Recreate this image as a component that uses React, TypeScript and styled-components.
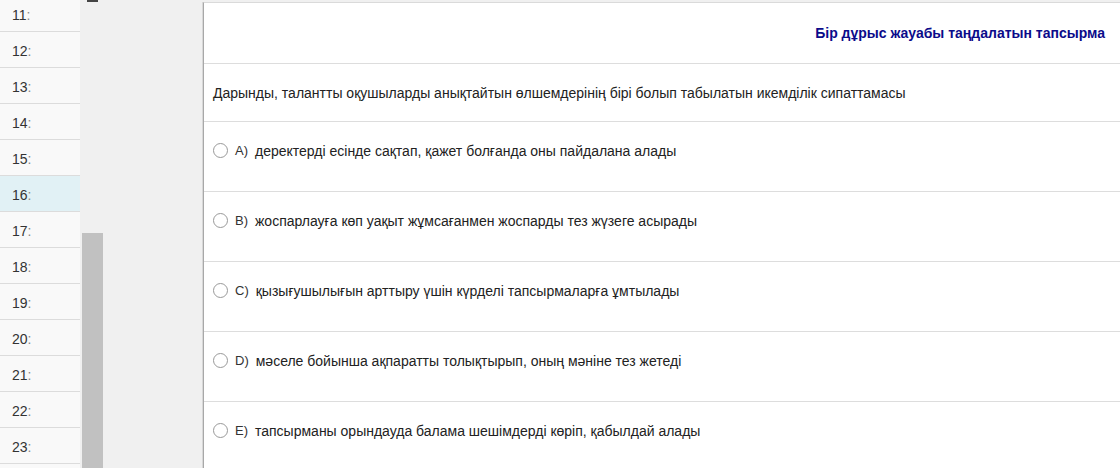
import React from "react";
import styled, { createGlobalStyle } from "styled-components";

const Global = createGlobalStyle`
  html, body { margin: 0; padding: 0; }
  body {
    width: 1120px;
    height: 468px;
    overflow: hidden;
    background: #f0f0f0;
    font-family: "Liberation Sans", Arial, sans-serif;
  }
`;

const Page = styled.div`
  display: flex;
  width: 1120px;
  height: 468px;
  overflow: hidden;
`;

const NumberList = styled.div`
  width: 80px;
  flex: none;
  margin-top: -4px;
  background: #f9f9f9;
  display: flex;
  flex-direction: column;
`;

const NumberRow = styled.div<{ $active?: boolean }>`
  height: 36px;
  flex: none;
  box-sizing: border-box;
  padding: 2px 0 0 12px;
  border-bottom: 1px solid #dcdcdc;
  background: ${(p) => (p.$active ? "#e1f1f5" : "#f9f9f9")};
  display: flex;
  align-items: center;
  font-size: 14px;
  color: #333;
`;

const Colon = styled.span`
  color: #888;
`;

const Gutter = styled.div`
  width: 123px;
  flex: none;
  display: flex;
  flex-direction: column;
  padding-left: 2px;
  box-sizing: border-box;
`;

const Mark = styled.div`
  width: 11px;
  height: 2px;
  margin-left: 5px;
  background: #444;
`;

const Spacer = styled.div`
  height: 231px;
  flex: none;
`;

const Thumb = styled.div`
  width: 21px;
  flex: 1;
  background: #c1c1c1;
`;

const CardArea = styled.div`
  flex: 1;
  padding-top: 2px;
  display: flex;
`;

const Card = styled.div`
  flex: 1;
  background: #fff;
  border-top: 1px solid #dadada;
  border-left: 1px solid #a8a8a8;
  box-shadow: -1px 0 0 #d8d8d8;
  display: flex;
  flex-direction: column;
`;

const Header = styled.div`
  height: 60px;
  flex: none;
  border-bottom: 1px solid #dddddd;
  display: flex;
  align-items: center;
  justify-content: flex-end;
  padding-right: 15px;
`;

const Title = styled.div`
  font-size: 14px;
  font-weight: bold;
  color: #0b0b8a;
`;

const Row = styled.div<{ $height: number }>`
  height: ${(p) => p.$height}px;
  flex: none;
  box-sizing: border-box;
  border-bottom: 1px solid #dddddd;
  padding: 20px 0 0 9px;
  display: flex;
  align-items: flex-start;
  font-size: 14px;
  line-height: 18px;
  color: #222;
`;

const Radio = styled.span`
  width: 15px;
  height: 15px;
  flex: none;
  margin-top: 1px;
  margin-right: 7px;
  border: 1px solid #999;
  border-radius: 50%;
  box-sizing: border-box;
  background: #fff;
`;

const Letter = styled.span`
  font-size: 13px;
  color: #333;
  margin-right: 7px;
`;

const numbers = [11, 12, 13, 14, 15, 16, 17, 18, 19, 20, 21, 22, 23];

const options = [
  ["A)", "деректерді есінде сақтап, қажет болғанда оны пайдалана алады"],
  ["B)", "жоспарлауға көп уақыт жұмсағанмен жоспарды тез жүзеге асырады"],
  ["C)", "қызығушылығын арттыру үшін күрделі тапсырмаларға ұмтылады"],
  ["D)", "мәселе бойынша ақпаратты толықтырып, оның мәніне тез жетеді"],
  ["E)", "тапсырманы орындауда балама шешімдерді көріп, қабылдай алады"],
];

export default function App() {
  return (
    <>
      <Global />
      <Page>
        <NumberList>
          {numbers.map((n) => (
            <NumberRow key={n} $active={n === 16}>
              {n}
              <Colon>:</Colon>
            </NumberRow>
          ))}
        </NumberList>
        <Gutter>
          <Mark />
          <Spacer />
          <Thumb />
        </Gutter>
        <CardArea>
          <Card>
            <Header>
              <Title>Бір дұрыс жауабы таңдалатын тапсырма</Title>
            </Header>
            <Row $height={58}>
              Дарынды, талантты оқушыларды анықтайтын өлшемдерінің бірі болып табылатын икемділік сипаттамасы
            </Row>
            {options.map(([l, t]) => (
              <Row key={l} $height={70}>
                <Radio />
                <Letter>{l}</Letter>
                {t}
              </Row>
            ))}
          </Card>
        </CardArea>
      </Page>
    </>
  );
}
